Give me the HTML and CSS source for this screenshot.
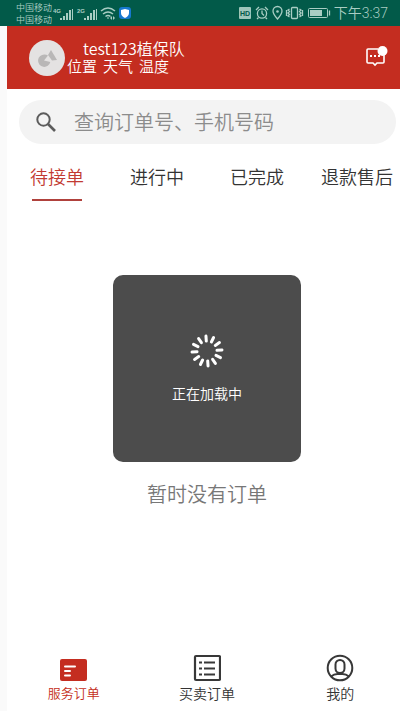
FILE: index.html
```html
<!DOCTYPE html>
<html lang="zh-CN">
<head>
<meta charset="utf-8">
<meta name="viewport" content="width=device-width, initial-scale=1">
<title>服务订单</title>
<link rel="stylesheet" href="styles.css">
</head>
<body>
<div class="status">
  <div class="carriers"><span>中国移动</span><span>中国移动</span></div>
  <svg class="signals" width="80" height="18" viewBox="0 0 80 18" aria-hidden="true">
    <g fill="#a9cdc3">
      <path d="M7 14h2v2h-2zM10 12h2v4h-2zM13 9h2v7h-2zM16 6h2v10h-2zM19 5h1v11h-1z"/>
      <path d="M31 14h2v2h-2zM34 12h2v4h-2zM37 9h2v7h-2zM40 6h2v10h-2zM43 5h1v11h-1z"/>
      <text x="0" y="9" class="net">4G</text>
      <text x="24" y="9" class="net">2G</text>
    </g>
    <g fill="none" stroke="#a9cdc3" stroke-width="1.500">
      <path d="M48 7q7-6 14 0M50 10q5-4 10 0M52.500 12.500q2.500-2 5 0"/>
    </g>
    <path d="M54 14l1-1 1 1-1 1zM57 14l2-2v4zM62 14l-2-2v4z" fill="#a9cdc3"/>
    <rect x="66" y="3" width="12" height="12" rx="3" fill="#1778cf"/>
    <path d="M72 5l4 1v3q0 3-4 5q-4-2-4-5V6z" fill="#fff"/>
  </svg>
  <svg class="system" width="92" height="16" viewBox="0 0 92 16" aria-hidden="true">
    <rect x="0" y="2" width="12" height="12" rx="1" fill="#9fc6bb"/>
    <text x="1" y="11" class="hd">HD</text>
    <g fill="none" stroke="#a9cdc3" stroke-width="1.300">
      <circle cx="23" cy="8.500" r="4.600"/>
      <path d="M23 5.500v3l2 2M17 5l3-3M29 5l-3-3M19.500 12.500L18 14M26.500 12.500L28 14"/>
      <path d="M38.500 14q-4.500-5-4.500-8a4.500 4.500 0 0 1 9 0q0 3-4.500 8z"/>
      <rect x="52.500" y="2.500" width="6" height="11" rx="1"/>
      <path d="M50.500 4l-1.500 1 1.500 1.500-1.500 1.500 1.500 1.500-1.500 1.500 1.500 1M47.500 5v6M60.500 4l1.500 1-1.500 1.500 1.500 1.500-1.500 1.500 1.500 1.500-1.500 1M63.500 5v6"/>
      <rect x="69.500" y="3.500" width="19" height="9" rx="1" stroke-width="1"/>
      <path d="M90.500 5.500v5"/>
    </g>
    <circle cx="38.500" cy="6.500" r="1.300" fill="#a9cdc3"/>
    <path d="M71 5h12v6h-12z" fill="#a9cdc3"/>
  </svg>
  <span class="time">下午3:37</span>
</div>
<div class="app">
  <header class="header">
    <svg class="avatar" width="36" height="36" viewBox="0 0 36 36" aria-hidden="true">
      <circle cx="18" cy="18" r="18" fill="#e4e2e2"/>
      <path d="M15.500 14.500a6.200 6.200 0 1 0 5.800 7.500l-6.300-1.500 4-5q-1.500-1-3.500-1z" fill="#b9b7b7"/>
      <path d="M22 10l6 10-5 .5-4-5.500z" fill="#b9b7b7"/>
    </svg>
    <div class="team">
      <h1>test123植保队</h1>
      <p><span>位置</span><span>天气</span><span>温度</span></p>
    </div>
    <button class="messages" type="button" aria-label="消息">
      <svg width="24" height="22" viewBox="0 0 24 22" aria-hidden="true">
        <path d="M14 3H4q-1 0-1 1v12q0 1 1 1h5l2 2 2-2h6q1 0 1-1V9" fill="none" stroke="#fff" stroke-width="1.600"/>
        <circle cx="18.500" cy="5" r="5" fill="#fff"/>
        <path d="M6 9h2v2H6zM10 9h2v2h-2zM14 9h2v2h-2z" fill="#fff"/>
      </svg>
    </button>
  </header>
  <label class="search">
    <svg width="20" height="20" viewBox="0 0 20 20" aria-hidden="true">
      <circle cx="7.500" cy="7.500" r="6.200" fill="none" stroke="#5c5c5c" stroke-width="2"/>
      <path d="M12 12l7 7" stroke="#5c5c5c" stroke-width="2.600"/>
    </svg>
    <input type="search" placeholder="查询订单号、手机号码" aria-label="查询订单号、手机号码">
  </label>
  <nav class="tabs" aria-label="订单状态">
    <button type="button" class="tab active">待接单</button>
    <button type="button" class="tab">进行中</button>
    <button type="button" class="tab">已完成</button>
    <button type="button" class="tab">退款售后</button>
  </nav>
  <main class="content">
    <div class="loading" role="status">
      <svg width="34" height="34" viewBox="-17 -17 34 34" aria-hidden="true">
        <g stroke="#fff" stroke-width="3" stroke-linecap="round" transform="rotate(-4)">
          <path d="M0-15V-10M0 15V10M-15 0H-10M15 0H10"/>
          <path transform="rotate(30)" d="M0-15V-10M0 15V10M-15 0H-10M15 0H10"/>
          <path transform="rotate(60)" d="M0-15V-10M0 15V10M-15 0H-10M15 0H10"/>
        </g>
      </svg>
      <span>正在加载中</span>
    </div>
    <p class="empty">暂时没有订单</p>
  </main>
  <nav class="bottom" aria-label="主导航">
    <a href="#service" class="item current">
      <svg width="28" height="28" viewBox="0 0 28 28" aria-hidden="true">
        <rect x="0" y="5" width="27" height="22" rx="2" fill="#c42d20"/>
        <path d="M5 12.500h10M5 17h5M5 21.500h5" stroke="#fff" stroke-width="2" stroke-linecap="round"/>
      </svg>
      <span>服务订单</span>
    </a>
    <a href="#trade" class="item">
      <svg width="28" height="28" viewBox="0 0 28 28" aria-hidden="true">
        <rect x="2" y="2" width="25" height="24" rx="1" fill="none" stroke="#383838" stroke-width="2.200"/>
        <path d="M6 8.500h3M11 8.500h11M6 14.500h3M11 14.500h11M6 20.500h3M11 20.500h11" stroke="#383838" stroke-width="2"/>
      </svg>
      <span>买卖订单</span>
    </a>
    <a href="#me" class="item">
      <svg width="28" height="28" viewBox="0 0 28 28" aria-hidden="true">
        <g fill="none" stroke="#383838" stroke-width="2">
          <circle cx="14" cy="14" r="12.300"/>
          <rect x="9.500" y="6" width="9" height="13" rx="4.500"/>
          <path d="M5 22.500q3-2.500 6.500-2.500h5q3.500 0 6.500 2.500"/>
        </g>
      </svg>
      <span>我的</span>
    </a>
  </nav>
</div>
</body>
</html>
```
FILE: styles.css
```css
* {
  box-sizing: border-box;
}

body {
  margin: 0;
  min-height: 100vh;
  display: flex;
  flex-direction: column;
  overflow-x: hidden;
  background: #fafafa;
  color: #333;
  font-family: "Noto Sans CJK SC", sans-serif;
  font-weight: 350;
}

h1,
p {
  margin: 0;
}

button {
  padding: 0;
  border: 0;
  background: none;
  color: inherit;
  font: inherit;
}

svg {
  display: block;
  flex: none;
}

.status {
  display: flex;
  align-items: center;
  height: 26px;
  padding: 0 12px 0 16px;
  background: #025a49;
  color: #a9cdc3;
}

.carriers {
  display: flex;
  flex-direction: column;
  padding-top: 2px;
  font-size: 9px;
  line-height: 12px;
}

.signals {
  margin-left: 1px;
}

.net {
  font: bold 6px "Liberation Sans", sans-serif;
}

.hd {
  font: bold 7px "Liberation Sans", sans-serif;
  fill: #025a49;
}

.system {
  margin-left: auto;
}

.time {
  margin-left: 3px;
  font-family: Roboto, "Noto Sans CJK SC", sans-serif;
  font-size: 14px;
  line-height: 20px;
}

/* The page surface is inset from the left and runs off the right edge. */
.app {
  flex: 1;
  display: flex;
  flex-direction: column;
  margin: 0 -7px 0 7px;
  background: #fff;
}

.header {
  display: flex;
  align-items: center;
  height: 63px;
  padding: 0 19px 0 22px;
  background: #c42d20;
  color: #fff;
}

.team {
  margin-left: 2px;
  padding-bottom: 2px;
}

.team h1 {
  padding-left: 16px;
  font-size: 16px;
  font-weight: 350;
  line-height: 18px;
}

.team p {
  display: flex;
  gap: 6px;
  font-size: 15px;
  line-height: 18px;
}

.messages {
  margin-left: auto;
  padding-bottom: 2px;
}

.search {
  display: flex;
  align-items: center;
  gap: 18px;
  height: 44px;
  margin: 11px 11px 0 12px;
  padding: 0 17px;
  border-radius: 22px;
  background: #f3f3f3;
}

.search input {
  flex: 1;
  min-width: 0;
  padding: 0 0 2px;
  border: 0;
  outline: 0;
  background: none;
  color: #333;
  font: inherit;
  font-size: 20px;
}

.search input::placeholder {
  color: #8c8c8c;
}

.tabs {
  display: grid;
  grid-template-columns: repeat(4, 1fr);
  margin-top: 15px;
}

.tab {
  display: flex;
  flex-direction: column;
  align-items: center;
  height: 43px;
  font-size: 18px;
  line-height: 34px;
}

.tab.active {
  color: #c23a32;
}

.tab.active::after {
  content: "";
  width: 50px;
  height: 2px;
  margin-top: 6px;
  background: #b0413c;
}

.content {
  flex: 1;
  display: flex;
  flex-direction: column;
  align-items: center;
  padding-top: 73px;
}

.loading {
  display: flex;
  flex-direction: column;
  align-items: center;
  justify-content: center;
  gap: 15px;
  width: 188px;
  height: 187px;
  border-radius: 10px;
  background: #4c4c4c;
  color: #fff;
  font-size: 14px;
  line-height: 20px;
}

.empty {
  margin-top: 17px;
  color: #777;
  font-size: 20px;
  line-height: 30px;
}

.bottom {
  display: grid;
  grid-template-columns: repeat(3, 1fr);
  padding-bottom: 7px;
}

.item {
  display: flex;
  flex-direction: column;
  align-items: center;
  color: #333;
  font-size: 14px;
  line-height: 22px;
  text-decoration: none;
}

.item.current {
  color: #c42d20;
  font-size: 13px;
}
```
